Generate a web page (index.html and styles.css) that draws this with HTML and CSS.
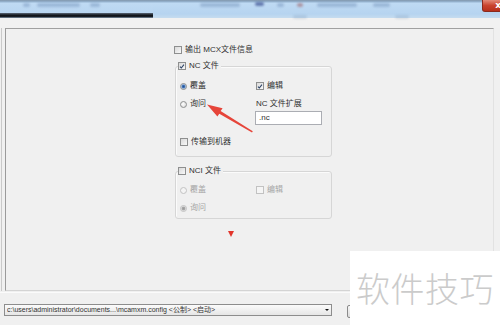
FILE: index.html
```html
<!DOCTYPE html>
<html lang="zh">
<head>
<meta charset="utf-8">
<title>Mastercam 配置</title>
<link rel="stylesheet" href="styles.css">
</head>
<body>
<div class="app">
  <header class="titlebar">
    <div class="tb-left">
      <div class="tb-blue"></div>
      <div class="tb-dark"></div>
    </div>
    <div class="tb-right">
      <div class="close">x</div>
    </div>
    <span class="smudge" style="left:23px;top:3px;width:7px"></span>
    <span class="smudge" style="left:37px;top:3px;width:43px"></span>
    <span class="smudge" style="left:90px;top:3px;width:10px"></span>
    <span class="smudge" style="left:200px;top:3px;width:40px"></span>
    <span class="smudge dark" style="left:255px;top:2px;width:9px"></span>
    <span class="smudge" style="left:277px;top:3px;width:7px"></span>
    <span class="smudge red" style="left:297px;top:3px;width:6px"></span>
    <span class="smudge" style="left:317px;top:3px;width:40px"></span>
    <span class="smudge" style="left:373px;top:3px;width:17px"></span>
    <span class="smudge faint" style="left:293px;top:15px;width:14px"></span>
    <span class="smudge faint" style="left:395px;top:15px;width:14px"></span>
  </header>
  <div class="strip"></div>
  <div class="main">
    <div class="edge"></div>
    <section class="panel">
      <div class="form">
        <div class="row"><span class="cb"></span><span>输出 MCX文件信息</span></div>

        <fieldset class="group g1">
          <legend class="row"><span class="cb"><svg viewBox="0 0 8 8"><path d="M1.3 4.1 L3.1 6 L6.6 1.6"/></svg></span><span>NC 文件</span></legend>
          <div class="grid">
            <div class="row"><span class="rb on"></span><span>覆盖</span></div>
            <div class="row"><span class="cb"><svg viewBox="0 0 8 8"><path d="M1.3 4.1 L3.1 6 L6.6 1.6"/></svg></span><span>编辑</span></div>
            <div class="row"><span class="rb"></span><span>询问</span></div>
            <div class="ext">
              <div class="row"><span>NC 文件扩展</span></div>
              <div class="input">.nc</div>
            </div>
          </div>
          <div class="row tx"><span class="cb"></span><span>传输到机器</span></div>
        </fieldset>

        <fieldset class="group g2">
          <legend class="row"><span class="cb"></span><span>NCI 文件</span></legend>
          <div class="grid dis">
            <div class="row"><span class="rb"></span><span>覆盖</span></div>
            <div class="row"><span class="cb"></span><span>编辑</span></div>
            <div class="row"><span class="rb on"></span><span>询问</span></div>
          </div>
        </fieldset>

        <div class="marker"></div>
      </div>
      <svg class="arrow" width="500" height="325" viewBox="0 0 500 325">
        <polygon points="207,104.5 222.6,108.2 220.6,110.9 252.8,131.3 252,132.6 219.3,113.8 217.4,116.6"/>
      </svg>
    </section>
  </div>
  <footer class="footer">
    <div class="combo">
      <span class="combo-text">c:\users\administrator\documents...\mcamxm.config &lt;公制&gt; &lt;启动&gt;</span>
      <span class="combo-btn"></span>
    </div>
    <div class="btn"></div>
  </footer>
</div>
<div class="watermark">软件技巧</div>
</body>
</html>
```

FILE: styles.css
```css
* { box-sizing: border-box; }
html, body { margin: 0; padding: 0; }
body {
  width: 500px;
  height: 325px;
  overflow: hidden;
  background: #f0f0f0;
  font-family: "Liberation Sans", "Noto Sans CJK SC", sans-serif;
  font-size: 8px;
  color: #303030;
  position: relative;
}
.app { display: flex; flex-direction: column; height: 325px; }

/* title bar */
.titlebar { display: flex; height: 18px; position: relative; flex: none; }
.tb-left { width: 153px; display: flex; flex-direction: column; }
.tb-blue {
  height: 13px;
  background: linear-gradient(#8196ab 0, #98b6d3 2px, #bfdaf3 3px, #b9d6f1 13px);
}
.tb-dark { height: 5px; background: linear-gradient(#5b6878, #0f1319 45%, #1b2028 80%, #9fb8cf); }
.tb-right {
  flex: 1;
  display: flex;
  justify-content: flex-end;
  align-items: flex-start;
  background: linear-gradient(#8196ab 0, #98b6d3 2px, #bfdaf3 3px, #b6d4f0 14px, #c6dcef 18px);
}
.close {
  width: 22px;
  height: 12px;
  margin-right: -4px;
  border: 1px solid #8a2a1e;
  border-top: 0;
  border-radius: 0 0 0 3px;
  background: linear-gradient(#e38a78, #c9432e 50%, #b7301c);
  color: #fff;
  font-family: "DejaVu Sans", sans-serif;
  font-weight: bold;
  font-size: 9px;
  line-height: 10px;
  text-align: right;
  padding-right: 2px;
}
.smudge {
  position: absolute;
  height: 4px;
  background: rgba(70, 100, 150, 0.28);
  filter: blur(1px);
  border-radius: 2px;
}
.smudge.dark { background: rgba(40, 60, 130, 0.6); }
.smudge.red { background: rgba(150, 70, 70, 0.45); }
.smudge.faint { background: rgba(90, 120, 160, 0.18); }

.strip { height: 10px; background: #f1f1f1; flex: none; }

/* main area */
.main { display: flex; height: 263px; flex: none; padding-left: 1px; }
.edge { width: 4px; border-left: 1px solid #c9c9c9; }
.panel {
  flex: 1;
  margin-right: 6px;
  border-top: 1px solid #a0a0a0;
  border-left: 1px solid #9a9a9a;
  border-bottom: 1px solid #d4d4d4;
  border-right: 1px solid #e2e2e2;
  position: relative;
}
.form {
  padding: 15px 0 0 168px;
  display: flex;
  flex-direction: column;
  align-items: flex-start;
}
.row {
  display: flex;
  align-items: center;
  height: 12px;
  gap: 3px;
  white-space: nowrap;
  line-height: 12px;
}

/* checkbox / radio */
.cb {
  width: 8px;
  height: 8px;
  flex: none;
  border: 1px solid #8e8f8f;
  background: linear-gradient(135deg, #d9d9d9, #f9f9f9);
  display: flex;
  align-items: center;
  justify-content: center;
}
.cb svg { width: 7px; height: 7px; }
.cb path { fill: none; stroke: #2e4468; stroke-width: 1.5; }
.rb {
  width: 7px;
  height: 7px;
  flex: none;
  border-radius: 50%;
  border: 1px solid #8e8f8f;
  background: radial-gradient(circle at 40% 40%, #ffffff, #d4d4d4);
}
.rb.on {
  background: radial-gradient(circle, #224f93 0, #3f72b6 1.3px, #a9c3e3 2.2px, #e6e6e6 3px);
}

/* group boxes */
.group {
  margin: 0 0 0 1px;
  width: 157px;
  border: 1px solid #d6d6d6;
  border-radius: 3px;
  box-shadow: inset 1px 1px 0 #fbfbfb;
  min-inline-size: 0;
}
.group legend {
  padding: 0 2px 0 0;
  margin-left: -2px;
  background: #f0f0f0;
}
.g1 { margin-top: 4px; padding: 8px 4px 8px 4px; }
.g2 { margin-top: 8px; padding: 7px 4px 4px 4px; }
.grid {
  display: grid;
  grid-template-columns: 76px 1fr;
  row-gap: 6px;
  align-items: start;
}
.ext { display: flex; flex-direction: column; }
.input {
  margin-top: 1px;
  margin-left: -1px;
  width: 67px;
  height: 14px;
  border: 1px solid #abadb3;
  background: #fff;
  padding-left: 3px;
  line-height: 12px;
}
.tx { margin-top: 11px; }

.dis { color: #a6a6a6; }
.dis .cb { border-color: #c2c2c2; background: #f5f5f5; }
.dis .rb { border-color: #c2c2c2; background: #f4f4f4; }
.dis .rb.on { background: radial-gradient(circle, #9a9a9a 0, #a8a8a8 1.4px, #dcdcdc 2.2px, #f4f4f4 3px); }

.marker {
  margin: 12px 0 0 54px;
  width: 0;
  height: 0;
  border-left: 3px solid transparent;
  border-right: 3px solid transparent;
  border-top: 6px solid #e2352b;
}

.arrow {
  position: absolute;
  left: -6px;
  top: -29px;
  pointer-events: none;
}
.arrow polygon { fill: #e6453a; }

/* footer */
.footer {
  flex: 1;
  display: flex;
  align-items: flex-start;
  margin-top: 1px;
  border-top: 1px solid #fbfbfb;
  padding: 11px 0 0 4px;
}
.combo {
  width: 328px;
  height: 12px;
  border: 1px solid #8d8d8d;
  background: linear-gradient(#fbfbfb, #e6e6e6);
  display: flex;
  align-items: center;
  padding-left: 2px;
}
.combo-text {
  flex: 1;
  font-size: 7px;
  line-height: 10px;
  white-space: nowrap;
  overflow: hidden;
  color: #333;
}
.combo-btn {
  width: 8px;
  height: 10px;
  display: flex;
  align-items: center;
  justify-content: center;
}
.combo-btn::after {
  content: "";
  border-left: 2px solid transparent;
  border-right: 2px solid transparent;
  border-top: 2px solid #111;
}
.btn {
  margin: 1px 0 0 15px;
  width: 60px;
  height: 13px;
  border: 1px solid #8a8a8a;
  border-radius: 2px;
  background: linear-gradient(#f6f6f6, #dcdcdc);
}

.watermark {
  position: absolute;
  left: 350px;
  top: 251px;
  width: 150px;
  height: 74px;
  background: #fff;
  color: #cbcbcb;
  font-family: "Noto Sans CJK SC", sans-serif;
  font-weight: 300;
  font-size: 34px;
  line-height: 74px;
  padding-left: 6px;
  letter-spacing: 0.5px;
  white-space: nowrap;
}
```
